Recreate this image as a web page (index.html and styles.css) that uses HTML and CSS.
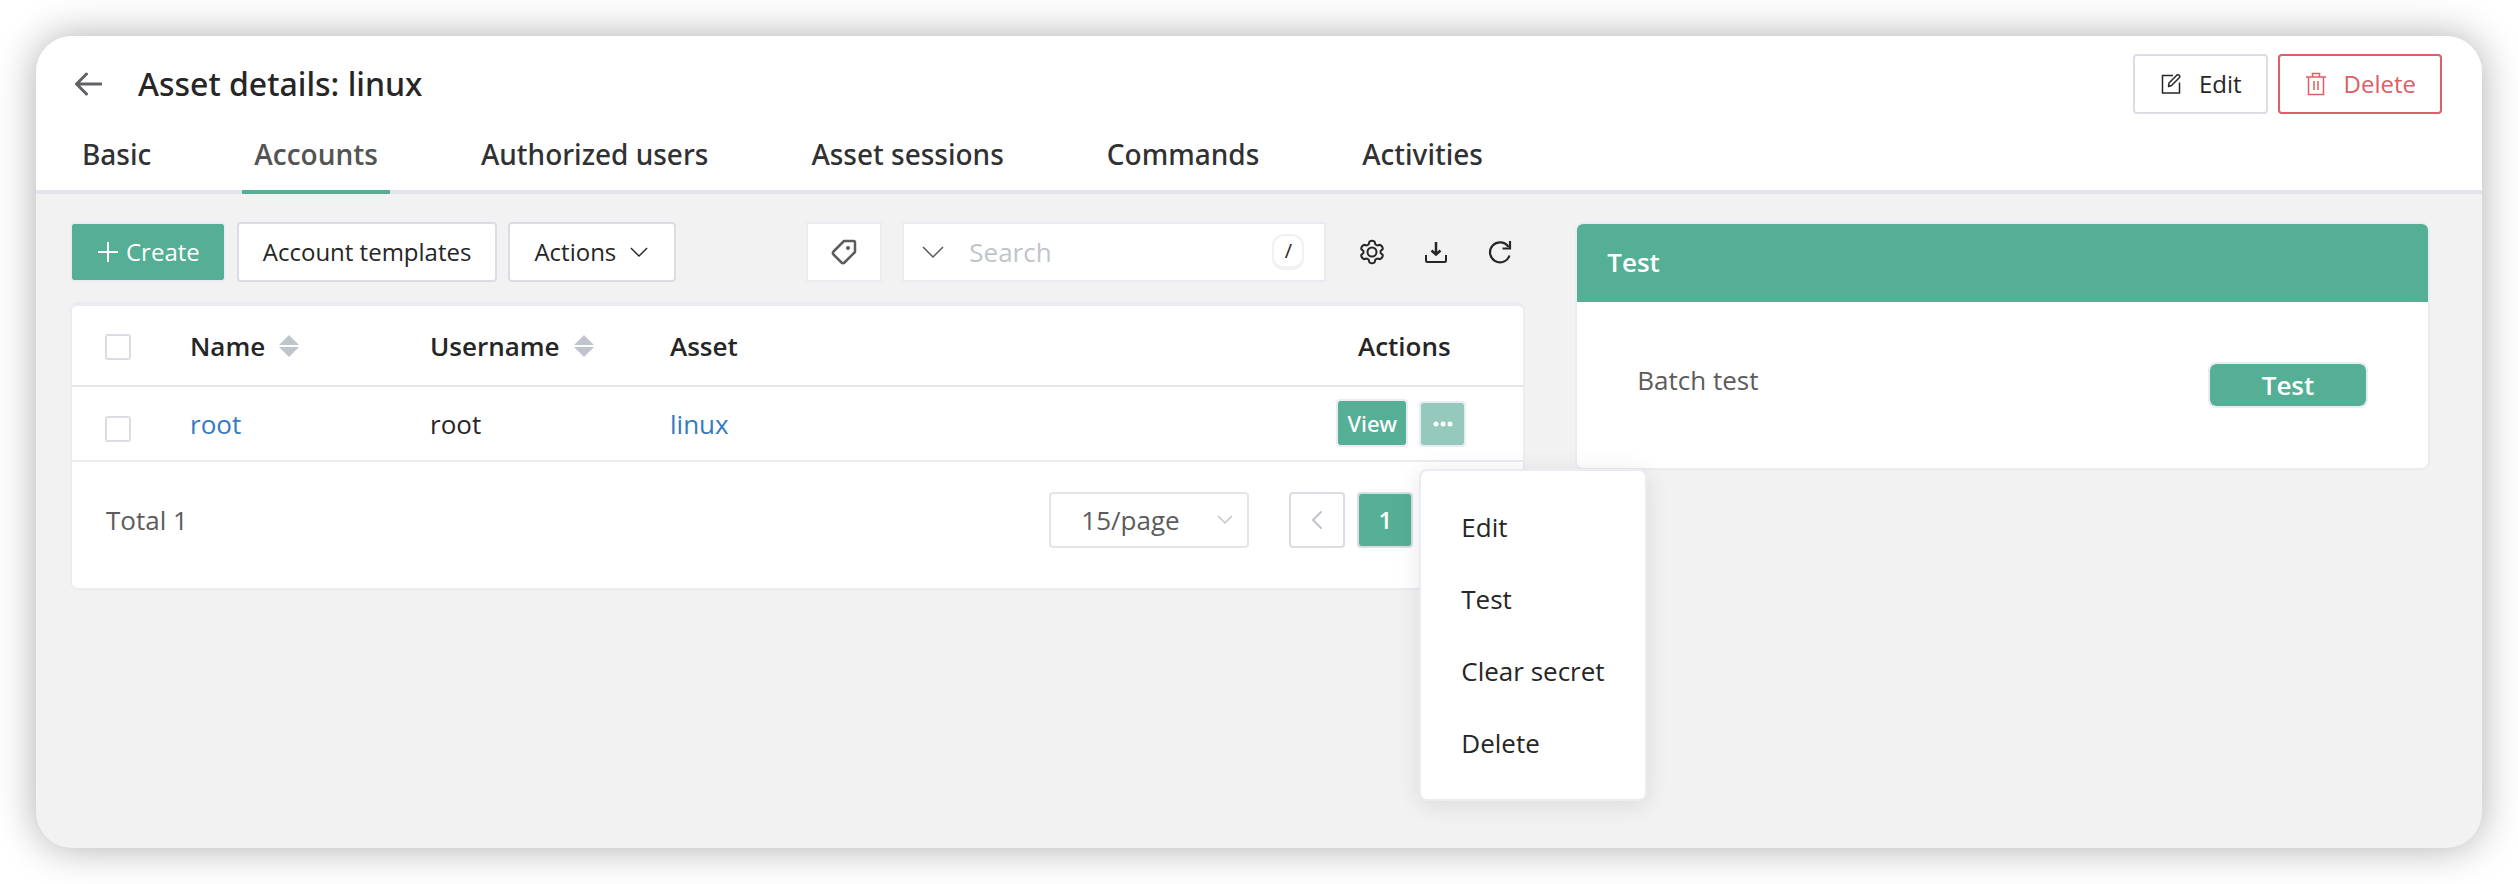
FILE: index.html
```
<!DOCTYPE html>
<html lang="en">
<head>
<meta charset="utf-8">
<title>Asset details: linux</title>
<meta name="viewport" content="width=device-width, initial-scale=1">
<link rel="stylesheet" href="styles.css">
</head>
<body>
<div class="window">
  <header class="header">
    <div class="title-bar">
      <button class="back" type="button" aria-label="Back">
        <svg class="icon" width="28" height="24" viewBox="0 0 28 24"><path d="M12.500 2 2.500 12l10 10M3 12h24" stroke-width="3" stroke-linecap="round" stroke-linejoin="round"/></svg>
      </button>
      <h1 class="title">Asset details: linux</h1>
      <button class="btn btn-icon" type="button">
        <svg class="icon" width="20" height="20" viewBox="0 0 20 20"><path d="M12 1.500H1.500V19h17V8.500" stroke-width="1.500"/><path d="M7.500 12.500l.5-3.500 8-8q1.200-.6 2.200.3t.3 2.200l-8 8z" stroke-width="1.500" stroke-linejoin="round"/></svg>
        Edit
      </button>
      <button class="btn btn-icon btn-danger" type="button">
        <svg class="icon" width="20" height="24" viewBox="0 0 20 24"><path d="M0 5h20M2.500 5v17.500h15V5M6.500 5V1.500h7V5M8 9v9M12 9v9" stroke-width="1.500"/></svg>
        Delete
      </button>
    </div>
    <nav class="tabs">
      <a class="tab" href="#basic">Basic</a>
      <a class="tab tab-active" href="#accounts" aria-current="page">Accounts</a>
      <a class="tab" href="#users">Authorized users</a>
      <a class="tab" href="#sessions">Asset sessions</a>
      <a class="tab" href="#commands">Commands</a>
      <a class="tab" href="#activities">Activities</a>
    </nav>
  </header>

  <main class="content">
    <section class="accounts">
      <div class="toolbar">
        <button class="btn btn-primary" type="button">
          <svg class="icon" width="20" height="20" viewBox="0 0 20 20"><path d="M10 0v20M0 10h20" stroke-width="2"/></svg>
          Create
        </button>
        <button class="btn" type="button">Account templates</button>
        <button class="btn btn-drop" type="button">
          Actions
          <svg class="icon" width="18" height="11" viewBox="0 0 20 12"><path d="M1 1l9 9 9-9" stroke-width="1.500"/></svg>
        </button>
        <div class="tools">
          <button class="tag-button" type="button" aria-label="Filter by label">
            <svg class="icon" width="26" height="26" viewBox="0 0 26 26"><path d="M13 2h9.500q1.500 0 1.500 1.500V13L13.500 23.500q-1.500 1.300-3 0L2.500 15.500q-1.300-1.500 0-3z" stroke-width="2.500" stroke-linejoin="round"/><circle cx="17" cy="9" r="2" class="dot"/></svg>
          </button>
          <div class="search">
            <svg class="icon" width="22" height="13" viewBox="0 0 22 13"><path d="M1 1l10 10L21 1" stroke-width="1.500"/></svg>
            <input class="search-input" type="text" placeholder="Search" aria-label="Search">
            <kbd class="key">/</kbd>
          </div>
          <button class="tool" type="button" aria-label="Settings">
            <svg class="icon" width="26" height="26" viewBox="0 0 26 26"><path d="M10.500 2.500Q13 1 15.500 2.500L16.300 5.300 18.300 6.500 21 5.800Q23.800 7 23.800 10L21.600 12v2L23.800 16Q23.800 19 21 20.200L18.300 19.500 16.300 20.700 15.500 23.500Q13 25 10.500 23.500L9.700 20.700 7.700 19.500 5 20.200Q2.200 19 2.200 16L4.400 14v-2L2.200 10Q2.200 7 5 5.800L7.700 6.500 9.700 5.300z" stroke-width="2" stroke-linejoin="round"/><circle cx="13" cy="13" r="4.500" stroke-width="2"/></svg>
          </button>
          <button class="tool" type="button" aria-label="Download">
            <svg class="icon" width="24" height="24" viewBox="0 0 24 24"><path d="M12 2v11M7.500 10.500l4.500 4 4.500-4" stroke-width="2.500"/><path d="M2 15v5.500q0 1.500 1.500 1.500h17q1.500 0 1.500-1.500V15" stroke-width="2"/></svg>
          </button>
          <button class="tool" type="button" aria-label="Refresh">
            <svg class="icon" width="24" height="24" viewBox="0 0 24 24"><path d="M21.500 15.500A10 10 0 1 1 20.500 7" stroke-width="2.200"/><path d="M22 1v7.500h-7.500" stroke-width="2.200"/></svg>
          </button>
        </div>
      </div>

      <div class="panel">
        <table class="table">
          <colgroup>
            <col class="col-check"><col class="col-text"><col class="col-text"><col><col class="col-actions">
          </colgroup>
          <thead>
            <tr>
              <th class="cell-check"><input class="check" type="checkbox" aria-label="Select all"></th>
              <th><span class="sortable">Name <svg class="sort" width="20" height="22" viewBox="0 0 20 22"><path d="M10 0l10 10H0zM10 22L0 12h20z"/></svg></span></th>
              <th><span class="sortable">Username <svg class="sort" width="20" height="22" viewBox="0 0 20 22"><path d="M10 0l10 10H0zM10 22L0 12h20z"/></svg></span></th>
              <th>Asset</th>
              <th class="cell-actions">Actions</th>
            </tr>
          </thead>
          <tbody>
            <tr>
              <td class="cell-check"><input class="check" type="checkbox" aria-label="Select root"></td>
              <td><a class="link" href="#root">root</a></td>
              <td>root</td>
              <td><a class="link" href="#linux">linux</a></td>
              <td class="cell-actions">
                <div class="row-actions">
                  <button class="btn-view" type="button">View</button>
                  <div class="more">
                    <button class="btn-more" type="button" aria-label="More" aria-expanded="true">
                      <svg class="dots" width="20" height="6" viewBox="0 0 20 6"><circle cx="3" cy="3" r="2.500"/><circle cx="10" cy="3" r="2.500"/><circle cx="17" cy="3" r="2.500"/></svg>
                    </button>
                    <div class="menu" role="menu">
                      <button class="menu-item" type="button" role="menuitem">Edit</button>
                      <button class="menu-item" type="button" role="menuitem">Test</button>
                      <button class="menu-item" type="button" role="menuitem">Clear secret</button>
                      <button class="menu-item" type="button" role="menuitem">Delete</button>
                    </div>
                  </div>
                </div>
              </td>
            </tr>
          </tbody>
        </table>
        <div class="pagination">
          <span class="total">Total 1</span>
          <div class="size">
            <select class="size-select" aria-label="Rows per page"><option>15/page</option></select>
            <svg class="icon size-arrow" width="16" height="10" viewBox="0 0 16 10"><path d="M1 1l7 7 7-7" stroke-width="1.500"/></svg>
          </div>
          <button class="page" type="button" aria-label="Previous page">
            <svg class="icon" width="12" height="20" viewBox="0 0 12 20"><path d="M10 2L2 10l8 8" stroke-width="2" stroke-linecap="round"/></svg>
          </button>
          <button class="page page-current" type="button" aria-current="page">1</button>
          <button class="page" type="button" aria-label="Next page">
            <svg class="icon" width="12" height="20" viewBox="0 0 12 20"><path d="M2 2l8 8-8 8" stroke-width="2" stroke-linecap="round"/></svg>
          </button>
        </div>
      </div>
    </section>

    <aside class="card">
      <h2 class="card-title">Test</h2>
      <div class="card-body">
        <span>Batch test</span>
        <button class="btn-test" type="button">Test</button>
      </div>
    </aside>
  </main>
</div>
</body>
</html>
```

FILE: styles.css
```
:root {
  --green: #54af95;
  --red: #dc6068;
  --line: #ebecf2;
  --border: #dcdde4;
  --text: #262626;
  --muted: #5c5c5c;
}

* {
  box-sizing: border-box;
}

body {
  margin: 0;
  min-height: 100vh;
  padding: 36px;
  display: flex;
  background: #fff;
  color: var(--text);
  font: 26px/36px "Open Sans", "Noto Sans", sans-serif;
}

button,
input,
select {
  font: inherit;
  color: inherit;
}

button {
  padding: 0;
  border: 0;
  background: none;
  cursor: pointer;
}

.icon {
  display: block;
  flex: none;
  fill: none;
  stroke: currentColor;
}

.window {
  flex: 1;
  min-width: 0;
  border-radius: 36px;
  background: #f2f2f2;
  box-shadow: 0 0 40px rgba(0, 0, 0, 0.32);
}

/* Header */
.header {
  border-radius: 36px 36px 0 0;
  background: #fff;
}

.title-bar {
  display: flex;
  align-items: center;
  gap: 10px;
  padding: 18px 40px 0 38px;
}

.back {
  color: #606266;
}

.title {
  flex: 1;
  margin: 0;
  padding-left: 26px;
  font-family: "Noto Sans", "Open Sans", sans-serif;
  font-size: 32px;
  font-weight: 500;
}

.btn {
  display: flex;
  align-items: center;
  height: 60px;
  padding: 0 24px;
  border: 2px solid var(--border);
  border-radius: 4px;
  background: #fff;
  font-size: 24px;
  white-space: nowrap;
}

.btn-icon {
  gap: 18px;
  padding: 0 24px 0 26px;
}

.btn-danger {
  border-color: var(--red);
  color: var(--red);
}

.btn-primary {
  gap: 8px;
  padding: 0 24px 0 26px;
  border-color: var(--line);
  background: var(--green);
  background-clip: padding-box;
  color: #fff;
}

.btn-drop {
  gap: 14px;
  padding-right: 26px;
}

.tabs {
  display: flex;
  gap: 79px;
  padding: 0 34px;
  border-bottom: 4px solid #e4e5eb;
}

.tab {
  margin-bottom: -4px;
  padding: 22px 12px 18px;
  border-bottom: 4px solid transparent;
  color: #303133;
  font-family: "Noto Sans", "Open Sans", sans-serif;
  font-size: 28px;
  font-weight: 500;
  text-decoration: none;
}

.tab-active {
  border-color: var(--green);
  color: #545454;
  font-family: "Open Sans", "Noto Sans", sans-serif;
  font-weight: 600;
}

/* Page body */
.content {
  display: grid;
  grid-template-columns: 63fr 37fr;
  align-items: start;
  gap: 50px;
  padding: 28px 52px 28px 34px;
}

.accounts {
  min-width: 0;
}

.toolbar {
  display: flex;
  gap: 11px;
}

.tools {
  display: flex;
  align-items: center;
  gap: 20px;
  margin: 0 3px 0 auto;
}

.tag-button {
  display: grid;
  place-items: center;
  width: 76px;
  height: 60px;
  border: 2px solid var(--line);
  background: #fff;
  color: var(--muted);
}

.dot {
  fill: currentColor;
  stroke: none;
}

.search {
  display: flex;
  align-items: center;
  gap: 25px;
  width: 424px;
  height: 60px;
  margin-right: 4px;
  padding: 0 20px 0 18px;
  border: 2px solid var(--line);
  background: #fff;
  color: var(--muted);
}

.search-input {
  flex: 1;
  min-width: 0;
  padding: 0;
  border: 0;
  outline: 0;
  background: none;
}

.search-input::placeholder {
  color: #c0c4cc;
  opacity: 1;
}

.key {
  width: 32px;
  border: 2px solid #f0f1f3;
  border-bottom-width: 4px;
  border-radius: 12px;
  color: var(--text);
  font: 20px/30px "Open Sans", sans-serif;
  text-align: center;
}

.tool {
  display: grid;
  place-items: center;
  width: 44px;
  height: 44px;
}

/* Accounts table */
.panel {
  margin-top: 20px;
  border: 2px solid var(--line);
  border-top-width: 4px;
  border-radius: 8px;
  background: #fff;
}

.table {
  width: 100%;
  border-spacing: 0;
  table-layout: fixed;
}

.col-check {
  width: 98px;
}

.col-text {
  width: 240px;
}

.col-actions {
  width: 238px;
}

.table th,
.table td {
  padding: 0 20px;
  text-align: left;
}

.table th {
  height: 81px;
  border-bottom: 2px solid #e6e6e6;
  font-weight: 600;
}

.table td {
  height: 75px;
  border-bottom: 2px solid var(--line);
}

.table .cell-check {
  padding: 2px 0 0 33px;
}

.table td.cell-check {
  padding-top: 10px;
}

.table .cell-actions {
  padding: 0;
  text-align: center;
}

.check {
  display: block;
  appearance: none;
  width: 26px;
  height: 26px;
  margin: 0;
  border: 2px solid var(--border);
  border-radius: 3px;
  background: #fff;
}

.sortable {
  display: flex;
  align-items: center;
  gap: 14px;
}

.sort {
  fill: #c0c4cc;
}

.link {
  color: #337ac0;
  text-decoration: none;
}

.row-actions {
  display: flex;
  justify-content: center;
  align-items: end;
  gap: 11px;
  padding: 0 6px 2px 0;
}

.btn-view,
.btn-more {
  display: grid;
  place-items: center;
  border: 2px solid var(--line);
  border-radius: 4px;
  background: var(--green);
  background-clip: padding-box;
  color: #fff;
}

.btn-view {
  width: 72px;
  height: 48px;
  font-family: "Noto Sans", "Open Sans", sans-serif;
  font-size: 22px;
  font-weight: 500;
}

.btn-more {
  width: 47px;
  height: 46px;
  background-color: #94c9bb;
}

.dots {
  fill: #fff;
}

.more {
  position: relative;
}

.menu {
  position: absolute;
  z-index: 1;
  top: calc(100% + 22px);
  left: 0;
  padding: 20px 0;
  border: 2px solid var(--line);
  border-radius: 8px;
  background: #fff;
  box-shadow: 0 4px 24px rgba(0, 0, 0, 0.1);
}

.menu-item {
  display: block;
  width: 100%;
  padding: 0 40px;
  line-height: 72px;
  text-align: left;
  white-space: nowrap;
}

/* Pagination */
.pagination {
  display: flex;
  align-items: center;
  gap: 12px;
  padding: 30px 42px 40px 34px;
  color: var(--muted);
}

.total {
  flex: 1;
}

.size {
  display: grid;
  align-items: center;
  margin-right: 28px;
}

.size-select,
.size-arrow {
  grid-area: 1 / 1;
}

.size-select {
  appearance: none;
  width: 200px;
  height: 56px;
  padding: 0 30px;
  border: 2px solid #e4e5e8;
  border-radius: 4px;
  background: #fff;
}

.size-arrow {
  justify-self: end;
  margin-right: 16px;
  color: #c0c4cc;
  pointer-events: none;
}

.page {
  display: grid;
  place-items: center;
  width: 56px;
  height: 56px;
  border: 2px solid var(--border);
  border-radius: 4px;
  background: #fff;
  color: #c0c4cc;
}

.page-current {
  background: var(--green);
  background-clip: padding-box;
  color: #fff;
  font-size: 24px;
  font-weight: 600;
}

/* Test card */
.card {
  border: 2px solid var(--line);
  border-radius: 8px;
  background: #fff;
}

.card-title {
  margin: 0;
  padding: 20px 30px 22px;
  border-radius: 6px 6px 0 0;
  background: var(--green);
  color: #fff;
  font-size: 26px;
  font-weight: 600;
}

.card-body {
  display: flex;
  justify-content: space-between;
  align-items: start;
  padding: 60px;
  color: var(--muted);
}

.btn-test {
  width: 160px;
  height: 46px;
  border: 2px solid var(--line);
  border-radius: 8px;
  background: var(--green);
  background-clip: padding-box;
  color: #fff;
  font-size: 26px;
  font-weight: 600;
}
```
